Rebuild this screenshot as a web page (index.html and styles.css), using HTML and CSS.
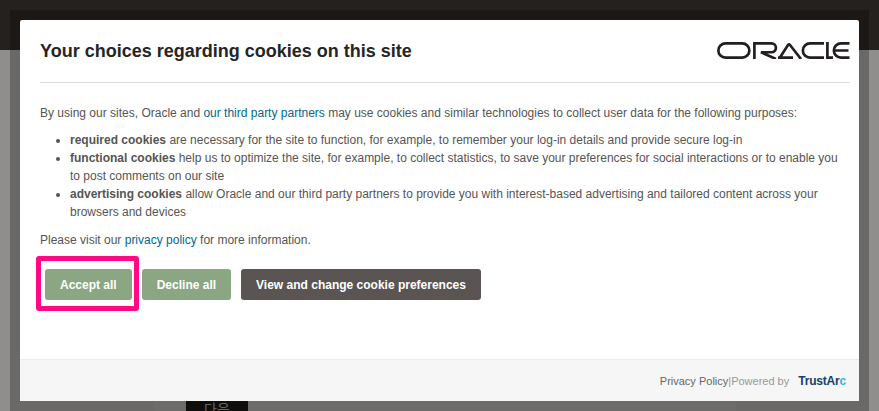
FILE: index.html
```html
<!DOCTYPE html>
<html lang="en-US">
  <head>
    <meta charset="UTF-8" />
    <title>Cookie preferences</title>
    <link rel="stylesheet" href="styles.css">
  </head>
  <body>
    <div class="page-header"></div>
    <div class="page-body">
      <div class="page-sheet">
        <span class="next-btn">다음</span>
      </div>
    </div>
    <div class="dialog-frame">
      <div class="dialog">
        <div class="dialog-main">
          <div class="dialog-head">
            <h1>Your choices regarding cookies on this site</h1>
            <svg class="oracle-logo" width="133" height="17" viewBox="0 0 133 17" fill="none" stroke="#231f20" stroke-width="2.7">
              <rect x="1.350" y="1.350" width="31" height="14.300" rx="7.150" />
              <path d="M37.400 17V1.350H54.500a4.300 4.300 0 0 1 0 8.900H44L59 17" />
              <path d="M61 15.650H76M62 17L71 3Q72 1.800 73 3L84 17" />
              <path d="M107 1.350H93a7.150 7.150 0 0 0 0 14.300H107" />
              <path d="M110.400 0V15.650H116" />
              <path d="M132.500 1.350H124a7.150 7.150 0 0 0 0 14.300H132.500M118 8.500H131.500" />
            </svg>
          </div>
          <p class="intro">By using our sites, Oracle and <a href="#">our third party partners</a> may use cookies and similar technologies to collect user data for the following purposes:</p>
          <ul>
            <li><b>required cookies</b> are necessary for the site to function, for example, to remember your log-in details and provide secure log-in</li>
            <li><b>functional cookies</b> help us to optimize the site, for example, to collect statistics, to save your preferences for social interactions or to enable you to post comments on our site</li>
            <li><b>advertising cookies</b> allow Oracle and our third party partners to provide you with interest-based advertising and tailored content across your browsers and devices</li>
          </ul>
          <p class="visit">Please visit our <a href="#">privacy policy</a> for more information.</p>
          <div class="actions">
            <div class="highlight"><button class="btn btn-green">Accept all</button></div>
            <button class="btn btn-green">Decline all</button>
            <button class="btn btn-dark">View and change cookie preferences</button>
          </div>
        </div>
        <div class="dialog-foot">
          <a href="#">Privacy Policy</a><span class="sep">|</span><span class="powered">Powered by</span>
          <span class="trustarc">TrustAr<span class="trustarc-c">c</span></span>
        </div>
      </div>
    </div>
  </body>
</html>
```

FILE: styles.css
```css
html, body {
  height: 100%;
}

body {
  margin: 0;
  overflow: hidden;
  font-family: "Liberation Sans", Arial, sans-serif;
  background-color: #8f8e8d;
}

.page-header {
  height: 50px;
  background: #25211e;
}

.page-body {
  height: 361px;
  padding-left: 154px;
}

.page-sheet {
  width: 582px;
  height: 361px;
  overflow: hidden;
  background: #939291;
}

.next-btn {
  display: block;
  width: 62px;
  height: 36px;
  margin: 340px 0 0 32px;
  text-align: center;
  font-size: 14px;
  line-height: 36px;
  font-family: "Noto Sans CJK KR", sans-serif;
  color: #8a8a8a;
  background: #151412;
}

/* dim frame round the dialog */
.dialog-frame {
  position: absolute;
  top: 0;
  left: 0;
  width: 879px;
  height: 411px;
  box-sizing: border-box;
  padding: 20px 20px 10px 20px;
  overflow: hidden;
}

.dialog-frame::before {
  content: "";
  position: absolute;
  top: 10px;
  left: 10px;
  width: 859px;
  height: 401px;
  background: rgba(0, 0, 0, 0.26);
}

.dialog {
  position: relative;
  display: flex;
  flex-direction: column;
  height: 381px;
  border-radius: 2px;
  background: #fff;
}

.dialog-main {
  flex: 1;
  padding: 0 9px 0 20px;
}

.dialog-head {
  display: flex;
  justify-content: space-between;
  align-items: center;
  height: 62px;
  border-bottom: 1px solid #dcdcdc;
}

h1 {
  margin: 0;
  font-size: 18px;
  font-weight: bold;
  color: #252525;
}

.oracle-logo {
  display: block;
  margin-bottom: 2px;
}

p, li {
  font-size: 12px;
  line-height: 18px;
  color: #555;
}

p {
  margin: 0;
}

.intro {
  padding-top: 21px;
}

a {
  color: #00688c;
  text-decoration: none;
}

ul {
  margin: 9px 0 10px;
  padding-left: 30px;
}

.actions {
  display: flex;
  align-items: center;
  gap: 10px;
  margin: 20px 0 0 5px;
}

.highlight {
  margin: -13px -7px -11px -9px;
  padding: 8px 2px 6px 4px;
  border: 5px solid #ff0a84;
  border-radius: 3px;
}

.btn {
  display: block;
  height: 31px;
  padding: 0 15px;
  border: 0;
  border-radius: 3px;
  font-family: inherit;
  font-size: 12px;
  font-weight: bold;
  color: #fff;
}

.btn-green {
  background: #8aa682;
}

.btn-dark {
  background: #5a5553;
}

.dialog-foot {
  display: flex;
  justify-content: flex-end;
  align-items: center;
  height: 41px;
  padding-right: 13px;
  border-top: 1px solid #ebebeb;
  font-size: 11px;
  color: #6d6e71;
  background: #f6f6f6;
}

.dialog-foot a {
  color: #666;
}

.sep, .powered {
  color: #999;
}

.trustarc {
  margin-left: 9px;
  font-size: 12px;
  font-weight: bold;
  letter-spacing: -0.2px;
  color: #14406f;
}

.trustarc-c {
  color: #35b5d8;
}
```
